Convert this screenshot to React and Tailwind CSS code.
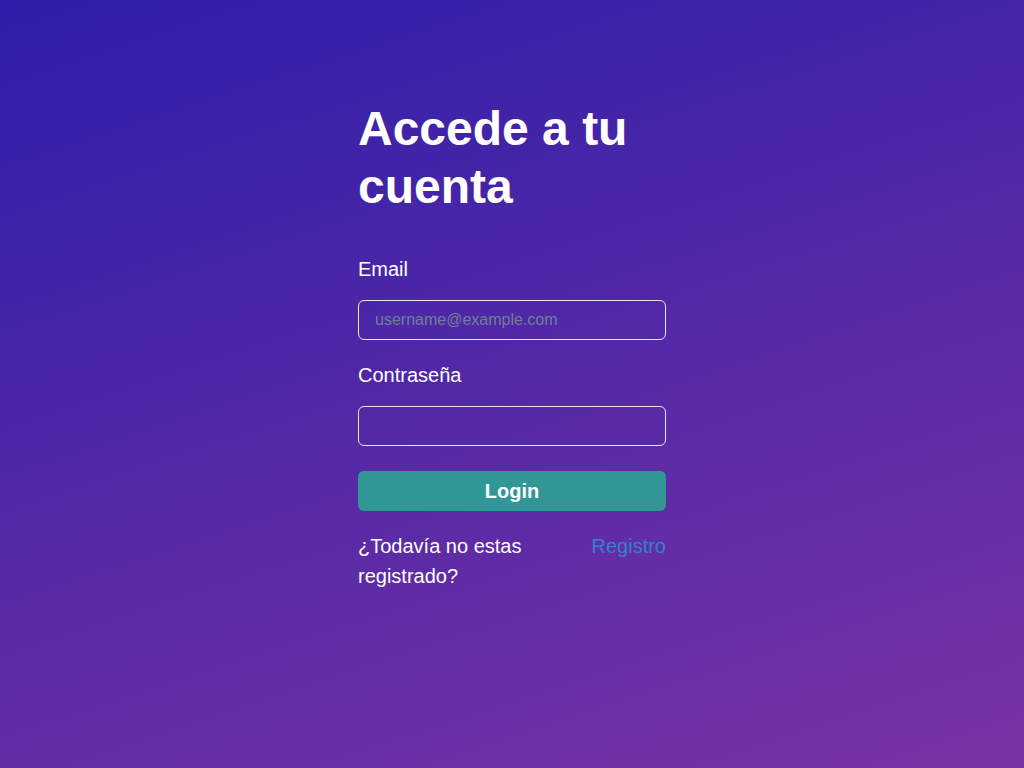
import React from 'react';

export default function App() {
  return (
    <div className="min-h-screen w-full bg-[linear-gradient(162deg,#2d1ea9,#7a33a4)] text-white font-['Liberation_Sans',Arial,sans-serif]">
      <div className="w-[308px] mx-auto pt-[100px]">
        <h1 className="text-[48px] font-bold leading-[1.2]">Accede a tu cuenta</h1>

        <form className="mt-[39px] flex flex-col" onSubmit={(e) => e.preventDefault()}>
          <label htmlFor="email" className="text-[20px] leading-[30px]">Email</label>
          <input
            id="email"
            type="email"
            placeholder="username@example.com"
            className="mt-4 h-10 w-full rounded-md border border-[#e2e8f0] bg-transparent px-4 text-base text-white placeholder:text-[#718096] outline-none"
          />

          <label htmlFor="password" className="mt-5 text-[20px] leading-[30px]">Contraseña</label>
          <input
            id="password"
            type="password"
            className="mt-4 h-10 w-full rounded-md border border-[#e2e8f0] bg-transparent px-4 text-base text-white outline-none"
          />

          <button
            type="submit"
            className="mt-[25px] h-10 w-full rounded-md bg-[#319795] text-[20px] font-bold text-white"
          >
            Login
          </button>
        </form>

        <div className="mt-5 flex justify-between gap-4 text-[20px] leading-[30px]">
          <p>¿Todavía no estas registrado?</p>
          <a href="#" className="text-[#3182ce] shrink-0">Registro</a>
        </div>
      </div>
    </div>
  );
}
